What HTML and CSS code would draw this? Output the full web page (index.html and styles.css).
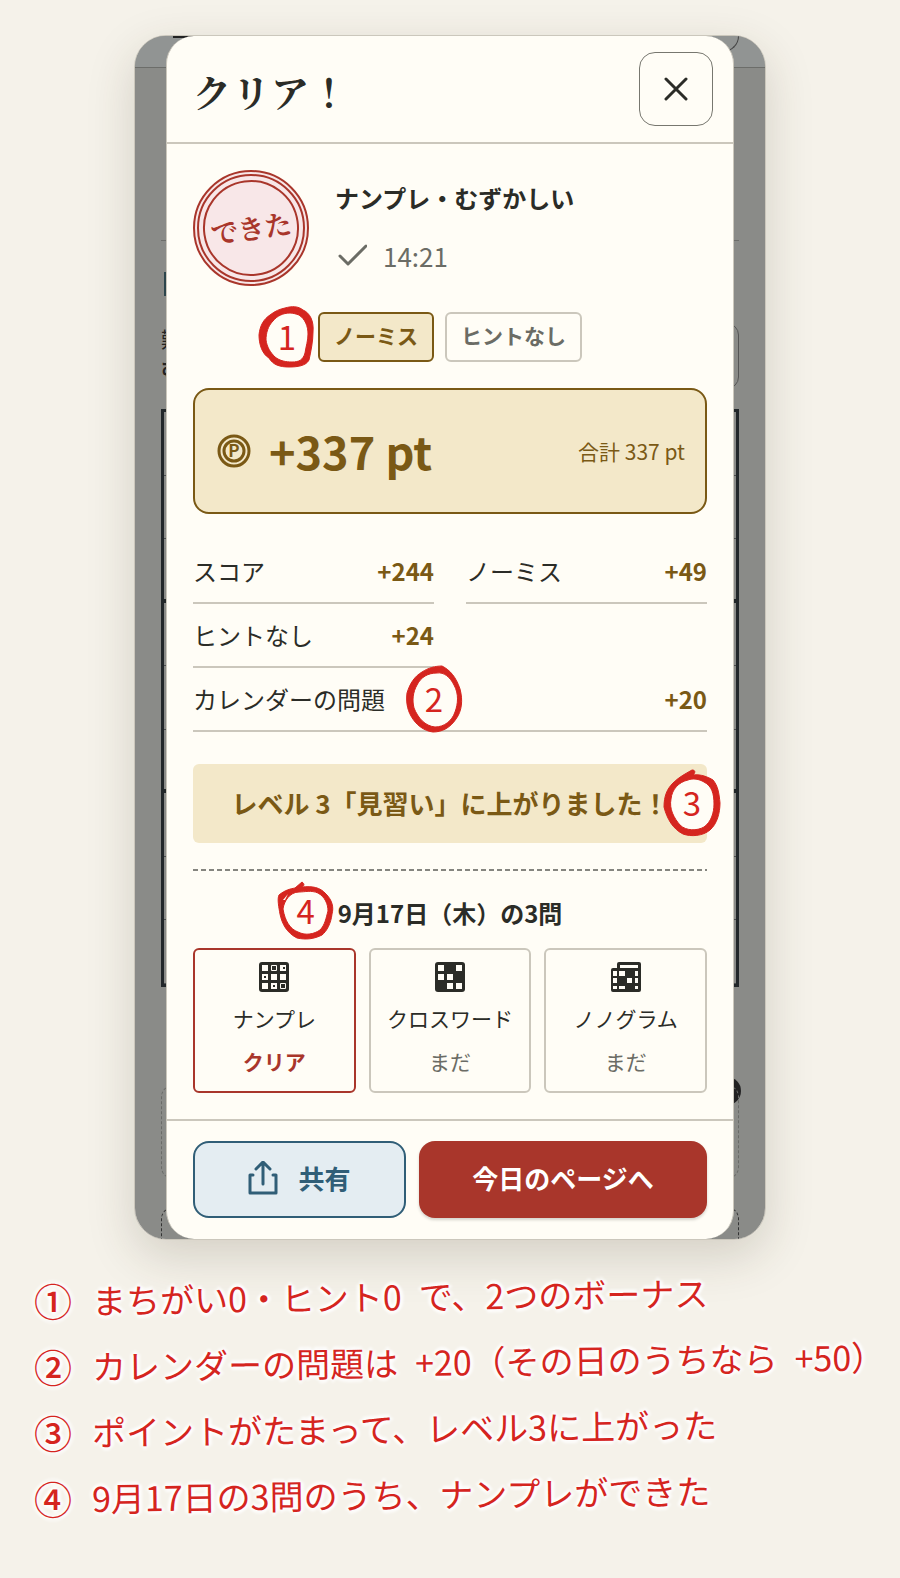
FILE: index.html
```
<!DOCTYPE html>
<html lang="ja">
  <head>
    <meta charset="utf-8">
    <meta name="viewport" content="width=device-width, initial-scale=1">
    <title>クリア！</title>
    <link rel="stylesheet" href="styles.css">
  </head>
  <body>
    <main class="phone">
      <div class="behind" aria-hidden="true">
        <div class="behind-bar"><div class="behind-back"></div><div class="behind-menu"></div></div>
        <div class="behind-head"><div class="behind-tab"></div></div>
        <div class="behind-info">
          <div class="behind-level"><span>難</span><b>む</b></div>
          <div class="behind-button"></div>
        </div>
        <div class="behind-board">
          <div></div><div></div><div class="thick"></div>
          <div></div><div></div><div class="thick"></div>
          <div></div><div></div><div></div>
        </div>
        <div class="behind-dot"></div>
        <div class="behind-pad"></div>
        <div class="behind-pad dark"></div>
      </div>

      <section class="dialog" role="dialog" aria-labelledby="dialog-title">
        <header class="dialog-header">
          <h1 class="dialog-title" id="dialog-title">クリア！</h1>
          <button class="close" type="button" aria-label="とじる">
            <svg width="24" height="24" viewBox="0 0 24 24"><path d="M2 2l20 20M22 2L2 22" /></svg>
          </button>
        </header>

        <div class="dialog-body">
          <div class="result">
            <div class="stamp"><span class="stamp-text">できた</span></div>
            <div class="result-info">
              <div class="result-name">ナンプレ・むずかしい</div>
              <div class="result-time">
                <svg width="32" height="24" viewBox="0 0 32 24"><path d="M5 12l8 8L31 2" /></svg>
                14:21
              </div>
            </div>
          </div>

          <div class="chips">
            <div class="chip chip_gold">
              ノーミス
              <div class="marker marker-1">
                <svg width="56" height="62" viewBox="0 0 56 62">
                  <path class="marker-fill" d="M32 4C45 4 53 17 52 32C50 48 48 57 31 58C16 58 4 43 4 28C5 14 18 4 32 4Z" />
                  <path class="marker-ring" d="M26 2C33 0 39 0 44 4C51 7 55 15 54 26C54 35 52 45 50 54C47 60 38 61 30 61C21 61 14 59 10 52C3 48 0 38 0 29C1 19 5 13 11 9C16 5 21 3 26 2ZM31 7C24 7 18 10 14 15C9 20 7 27 7 34C8 41 11 46 16 51C21 55 27 56 33 56C40 56 44 54 46 47C47 40 49 35 49 28C49 20 46 13 40 9C37 8 34 7 31 7Z" />
                </svg>
                <span>1</span>
              </div>
            </div>
            <div class="chip">ヒントなし</div>
          </div>

          <div class="points">
            <svg class="coin" width="34" height="34" viewBox="0 0 34 34">
              <circle cx="17" cy="17" r="15" />
              <circle cx="17" cy="17" r="10" />
              <text x="17" y="23" text-anchor="middle">P</text>
            </svg>
            <strong class="points-value">+337 pt</strong>
            <span class="points-total">合計 337 pt</span>
          </div>

          <dl class="scores">
            <div class="score"><dt>スコア</dt><dd>+244</dd></div>
            <div class="score"><dt>ノーミス</dt><dd>+49</dd></div>
            <div class="score"><dt>ヒントなし</dt><dd>+24</dd></div>
            <div class="score score_wide">
              <dt>カレンダーの問題</dt>
              <dd>+20</dd>
              <dd class="marker marker-2">
                <svg width="56" height="66" viewBox="0 0 56 66">
                  <path class="marker-fill" d="M30 4C45 5 54 20 53 36C52 52 42 63 28 63C14 61 4 48 4 33C6 17 16 5 30 4Z" />
                  <path class="marker-ring" d="M36 0C44 4 50 11 54 23C57 34 56 45 50 53C44 62 36 66 27 66C18 65 10 59 5 50C1 43 0 35 1 27C4 17 9 10 16 6C22 2 29 0 36 0ZM31 7C22 7 15 11 11 19C7 26 6 34 8 42C12 52 19 60 29 61C38 61 46 55 49 46C52 38 53 28 48 19C44 11 38 6 31 7Z" />
                </svg>
                <span>2</span>
              </dd>
            </div>
          </dl>

          <div class="levelup">
            レベル 3「見習い」に上がりました！
            <div class="marker marker-3">
              <svg width="56" height="66" viewBox="0 0 56 66">
                <path class="marker-fill" d="M28 7C43 6 53 16 52 34C52 51 43 62 29 62C13 61 3 47 3 33C5 17 14 9 28 7Z" />
                <path class="marker-ring" d="M28 0C31 0 32 2 29 5C37 4 44 7 49 10C54 16 55 23 56 33C56 43 53 54 46 60C39 66 27 67 19 64C9 59 3 49 0 37C0 26 3 19 9 13C15 7 21 4 28 0ZM24 10C15 12 8 19 7 29C5 39 10 48 16 55C22 61 33 61 40 57C47 52 50 43 50 34C50 24 48 16 40 12C35 9 29 8 24 10Z" />
              </svg>
              <span>3</span>
            </div>
          </div>

          <section class="daily">
            <h2 class="daily-title">
              9月17日（木）の3問
              <span class="marker marker-4">
                <svg width="56" height="58" viewBox="0 0 56 58">
                  <path class="marker-fill" d="M28 6C42 6 53 15 52 29C50 44 41 54 28 54C14 54 4 42 4 27C4 16 13 7 28 6Z" />
                  <path class="marker-ring" d="M24 0C27 2 26 4 24 5C34 4 42 5 48 12C54 18 56 25 54 32C53 41 49 49 44 53C36 57 28 58 19 56C9 51 4 42 2 32C1 26-1 17 1 13C7 8 12 7 17 6ZM21 10C12 10 6 19 5 27C7 39 12 47 20 50C28 54 36 52 42 48C47 43 48 36 50 29C50 22 47 15 40 11C33 8 27 10 21 10Z" />
                  <path class="marker-fill" d="M5 18l5-6-3 6z" />
                </svg>
                <span>4</span>
              </span>
            </h2>
            <div class="cards">
              <div class="card card_done">
                <svg width="30" height="30" viewBox="0 0 30 30">
                  <rect class="ink" width="30" height="30" rx="3" />
                  <path class="paper" d="M3 3h6v6H3zM21 3h6v6h-6zM3 12h6v6H3zM12 12h6v6h-6zM21 12h6v6h-6zM3 21h6v6H3zM12 21h6v6h-6z" />
                  <path class="frame" d="M12.500 3.500h5v5h-5zM21.500 21.500h5v5h-5z" />
                  <path class="ink" d="M24 5h2v2h-2zM5 14h2v2H5zM14 23h2v2h-2z" />
                </svg>
                <div class="card-name">ナンプレ</div>
                <div class="card-state">クリア</div>
              </div>
              <div class="card">
                <svg width="30" height="30" viewBox="0 0 30 30">
                  <rect class="ink" width="30" height="30" rx="3" />
                  <path class="paper" d="M3 3h6v6H3zM21 3h6v6h-6zM3 12h6v6H3zM12 12h6v6h-6zM12 21h6v6h-6zM21 21h6v6h-6z" />
                </svg>
                <div class="card-name">クロスワード</div>
                <div class="card-state">まだ</div>
              </div>
              <div class="card">
                <svg width="30" height="30" viewBox="0 0 30 30">
                  <path class="ink" d="M8 0h20q2 0 2 2v26q0 2-2 2H2q-2 0-2-2V8q0-2 2-2h4V2q0-2 2-2z" />
                  <path class="paper" d="M9 3h18v3H9zM2 9h4v5H2zM8 9h6v5H8zM24 9h3v5h-3zM2 16h4v5H2zM16 16h5v5h-5zM24 16h3v5h-3zM2 24h4v3H2zM8 24h6v3H8zM24 24h3v3h-3z" />
                </svg>
                <div class="card-name">ノノグラム</div>
                <div class="card-state">まだ</div>
              </div>
            </div>
          </section>
        </div>

        <footer class="dialog-footer">
          <button class="button button_share" type="button">
            <svg width="30" height="34" viewBox="0 0 30 34"><path d="M15 23V2M8 8l7-7 7 7M5 14H2v18h26V14h-3" /></svg>
            共有
          </button>
          <button class="button button_primary" type="button">今日のページへ</button>
        </footer>
      </section>
    </main>

    <ul class="notes">
      <li><span class="note-number">①</span><span class="note-text">まちがい0・ヒント0&ensp;で、2つのボーナス</span></li>
      <li><span class="note-number">②</span><span class="note-text">カレンダーの問題は&ensp;+20（その日のうちなら&ensp;+50）</span></li>
      <li><span class="note-number">③</span><span class="note-text">ポイントがたまって、レベル3に上がった</span></li>
      <li><span class="note-number">④</span><span class="note-text">9月17日の3問のうち、ナンプレができた</span></li>
    </ul>
  </body>
</html>
```
FILE: styles.css
```
:root {
  --ink: #2b2c27;
  --muted: #6b6c65;
  --paper: #fffdf6;
  --line: #cbc7bc;
  --gold: #7a5915;
  --gold-bg: #f3e8c9;
  --red: #a9362b;
  --blue: #305e77;
  --pen: #d5251f;
}

* {
  box-sizing: border-box;
}

body {
  margin: 0;
  padding: 35px 0 32px;
  background: #f5f2ea;
  color: var(--ink);
  font-family: "Noto Sans CJK JP", "Noto Sans", sans-serif;
  font-size: 24px;
  line-height: 38px;
}

h1,
h2,
dl,
dd,
ul {
  margin: 0;
  padding: 0;
}

button {
  font: inherit;
  cursor: pointer;
}

.phone {
  position: relative;
  max-width: 632px;
  margin: 0 auto;
  padding: 0 31px;
  border: 1px solid var(--line);
  border-radius: 32px;
  box-shadow: 0 16px 48px rgba(60, 50, 30, 0.18);
}

/* the game screen under the dialog */

.behind {
  position: absolute;
  inset: 0;
  overflow: hidden;
  border-radius: 31px;
  background: #8a8b88;
  font-size: 21px;
  line-height: 30px;
}

.behind-bar {
  display: flex;
  justify-content: space-between;
  height: 32px;
  padding: 0 26px 0 38px;
  border-bottom: 1px solid #6c6d6a;
  background: #919493;
}

.behind-back {
  width: 20px;
  height: 2px;
  background: #222;
}

.behind-menu {
  width: 48px;
  height: 16px;
  border: 1px solid #444;
  border-top: 0;
  border-radius: 0 0 16px 16px;
}

.behind-head {
  display: flex;
  align-items: flex-end;
  height: 228px;
  margin: 0 26px;
  padding-left: 3px;
  background: linear-gradient(#6c6d6a, #6c6d6a) 0 172px / 100% 1px no-repeat;
}

.behind-tab {
  width: 20px;
  height: 24px;
  background: #2c454c;
}

.behind-info {
  display: flex;
  justify-content: space-between;
  margin: 27px 26px 20px;
}

.behind-level {
  display: flex;
  flex-direction: column;
  color: #222;
}

.behind-button {
  width: 80px;
  height: 66px;
  border: 1px solid #555;
  border-radius: 12px;
}

.behind-board {
  height: 578px;
  margin: 0 26px 90px;
  display: grid;
  grid-template-rows: repeat(9, 1fr);
  border: 3px solid #22272a;
}

.behind-board div {
  border-bottom: 1px solid #4c4f50;
}

.behind-board .thick {
  border-bottom: 4px solid #22272a;
}

.behind-dot {
  width: 28px;
  height: 28px;
  margin: 0 24px -20px auto;
  border-radius: 50%;
  background: #222;
}

.behind-pad {
  height: 94px;
  margin: 0 26px 28px;
  border: 1px dashed #6a6b68;
  border-radius: 12px;
}

.behind-pad.dark {
  border-color: #333;
}

/* dialog */

.dialog {
  position: relative;
  border: 1px solid var(--line);
  border-width: 0 1px;
  border-radius: 28px;
  background: var(--paper);
}

.dialog-header {
  display: flex;
  align-items: center;
  justify-content: space-between;
  padding: 16px 20px 16px 26px;
  border-bottom: 2px solid var(--line);
}

.dialog-title {
  padding-top: 4px;
  font-family: "Noto Serif CJK JP", "Noto Serif JP", "Noto Sans CJK JP", serif;
  font-size: 38px;
  font-weight: bold;
  line-height: 48px;
  letter-spacing: 1px;
}

.close {
  display: grid;
  place-items: center;
  width: 74px;
  height: 74px;
  border: 1px solid #77776f;
  border-radius: 16px;
  background: var(--paper);
}

.close svg,
.result-time svg,
.button_share svg {
  fill: none;
  stroke: currentColor;
  stroke-width: 3;
  stroke-linecap: round;
  stroke-linejoin: round;
}

.close svg {
  color: var(--ink);
}

.dialog-body {
  display: flex;
  flex-direction: column;
  gap: 26px;
  padding: 26px;
}

.result {
  display: flex;
  align-items: center;
  gap: 26px;
}

.stamp {
  display: grid;
  place-items: center;
  flex: none;
  width: 116px;
  height: 116px;
  padding: 4px;
  border: 6px double var(--red);
  border-radius: 50%;
  background: #f8e7e8;
}

.stamp-text {
  display: grid;
  place-items: center;
  width: 100%;
  height: 100%;
  border: 2px solid var(--red);
  border-radius: 50%;
  color: var(--red);
  font-family: "Noto Serif CJK JP", "Noto Serif JP", "Noto Sans CJK JP", serif;
  font-size: 27px;
  font-weight: bold;
  transform: rotate(-8deg);
}

.result-info {
  display: flex;
  flex-direction: column;
  gap: 20px;
  padding-bottom: 2px;
}

.result-name {
  font-weight: bold;
}

.result-time {
  display: flex;
  align-items: center;
  gap: 16px;
  color: var(--muted);
  font-size: 26px;
}

.chips {
  display: flex;
  justify-content: center;
  gap: 11px;
}

.chip {
  position: relative;
  padding: 3px 14px 7px;
  border: 2px solid var(--line);
  border-radius: 6px;
  color: var(--muted);
  font-size: 21px;
  font-weight: bold;
  line-height: 36px;
}

.chip_gold {
  border-color: var(--gold);
  background: var(--gold-bg);
  color: var(--gold);
}

.points {
  display: flex;
  align-items: center;
  padding: 20px 20px 20px 22px;
  border: 2px solid var(--gold);
  border-radius: 16px;
  background: var(--gold-bg);
  color: var(--gold);
}

.coin {
  margin-right: 18px;
  fill: none;
  stroke: currentColor;
  stroke-width: 3;
}

.coin text {
  fill: currentColor;
  stroke: none;
  font-size: 17px;
  font-weight: bold;
}

.points-value {
  font-size: 45px;
  line-height: 82px;
}

.points-total {
  margin-left: auto;
  font-size: 21px;
}

.scores {
  display: grid;
  grid-template-columns: 1fr 1fr;
  column-gap: 32px;
  margin-bottom: 6px;
}

.score {
  position: relative;
  display: flex;
  justify-content: space-between;
  padding: 12px 0;
  border-bottom: 2px solid var(--line);
}

.score_wide {
  grid-column: 1 / -1;
}

.score dd {
  color: var(--gold);
  font-weight: bold;
}

.levelup {
  position: relative;
  padding: 19px 20px 20px;
  border-radius: 6px;
  background: var(--gold-bg);
  color: var(--gold);
  font-size: 26px;
  font-weight: bold;
  line-height: 40px;
  text-align: center;
}

.daily {
  padding-top: 25px;
  background: repeating-linear-gradient(to right, #85857f 0 5px, transparent 5px 8px) 0 0 / 100% 2px no-repeat;
}

.daily-title {
  position: relative;
  width: fit-content;
  margin: 0 auto 16px;
  font-size: 24px;
}

.cards {
  display: grid;
  grid-template-columns: repeat(3, 1fr);
  gap: 13px;
}

.card {
  display: flex;
  flex-direction: column;
  align-items: center;
  padding: 12px 0 11px;
  border: 2px solid var(--line);
  border-radius: 6px;
  font-size: 21px;
}

.card .ink {
  fill: var(--ink);
}

.card .paper {
  fill: var(--paper);
}

.card .frame {
  fill: none;
  stroke: var(--paper);
}

.card-name {
  margin: 7px 0 5px;
}

.card-state {
  color: var(--muted);
}

.card_done {
  border-color: var(--red);
}

.card_done .card-state {
  color: var(--red);
  font-weight: bold;
}

.dialog-footer {
  display: grid;
  grid-template-columns: 213fr 288fr;
  gap: 13px;
  padding: 20px 26px 21px;
  border-top: 2px solid var(--line);
}

.button {
  display: flex;
  align-items: center;
  justify-content: center;
  gap: 20px;
  height: 77px;
  padding: 0 0 3px;
  border: 0;
  border-radius: 16px;
  font-size: 26px;
  font-weight: bold;
}

.button_share {
  border: 2px solid var(--blue);
  background: #e4edf2;
  color: var(--blue);
}

.button_primary {
  background: var(--red);
  color: #fff;
  box-shadow: 0 2px 3px rgba(43, 44, 39, 0.2);
}

/* pen marks */

.marker {
  position: absolute;
  display: grid;
  place-items: center;
}

.marker svg,
.marker span {
  grid-area: 1 / 1;
}

.marker svg {
  overflow: visible;
}

.marker span {
  padding-bottom: 2px;
  color: var(--pen);
  font-size: 33px;
  font-weight: normal;
}

.marker-fill {
  fill: var(--paper);
}

.marker-ring {
  fill: var(--pen);
  fill-rule: evenodd;
  stroke: var(--pen);
}

.marker-1 {
  top: -8px;
  left: -61px;
}

.marker-2 {
  top: -2px;
  left: 213px;
}

.marker-3 {
  top: 6px;
  right: -13px;
}

.marker-4 {
  top: -12px;
  left: -60px;
}

.notes {
  padding: 43px 24px 0 34px;
  list-style: none;
  color: var(--pen);
  font-size: 34px;
  line-height: 34px;
  text-shadow: 0 0 3px #fff, 0 0 3px #fff, 3px 0 3px #fff, -3px 0 3px #fff, 0 3px 3px #fff, 0 -3px 3px #fff;
}

.notes li {
  display: flex;
  align-items: center;
  gap: 20px;
  margin-bottom: 32px;
}

.note-number {
  font-size: 38px;
  font-weight: 500;
}

.note-text {
  transform: rotate(-0.7deg);
  transform-origin: left;
}
```
